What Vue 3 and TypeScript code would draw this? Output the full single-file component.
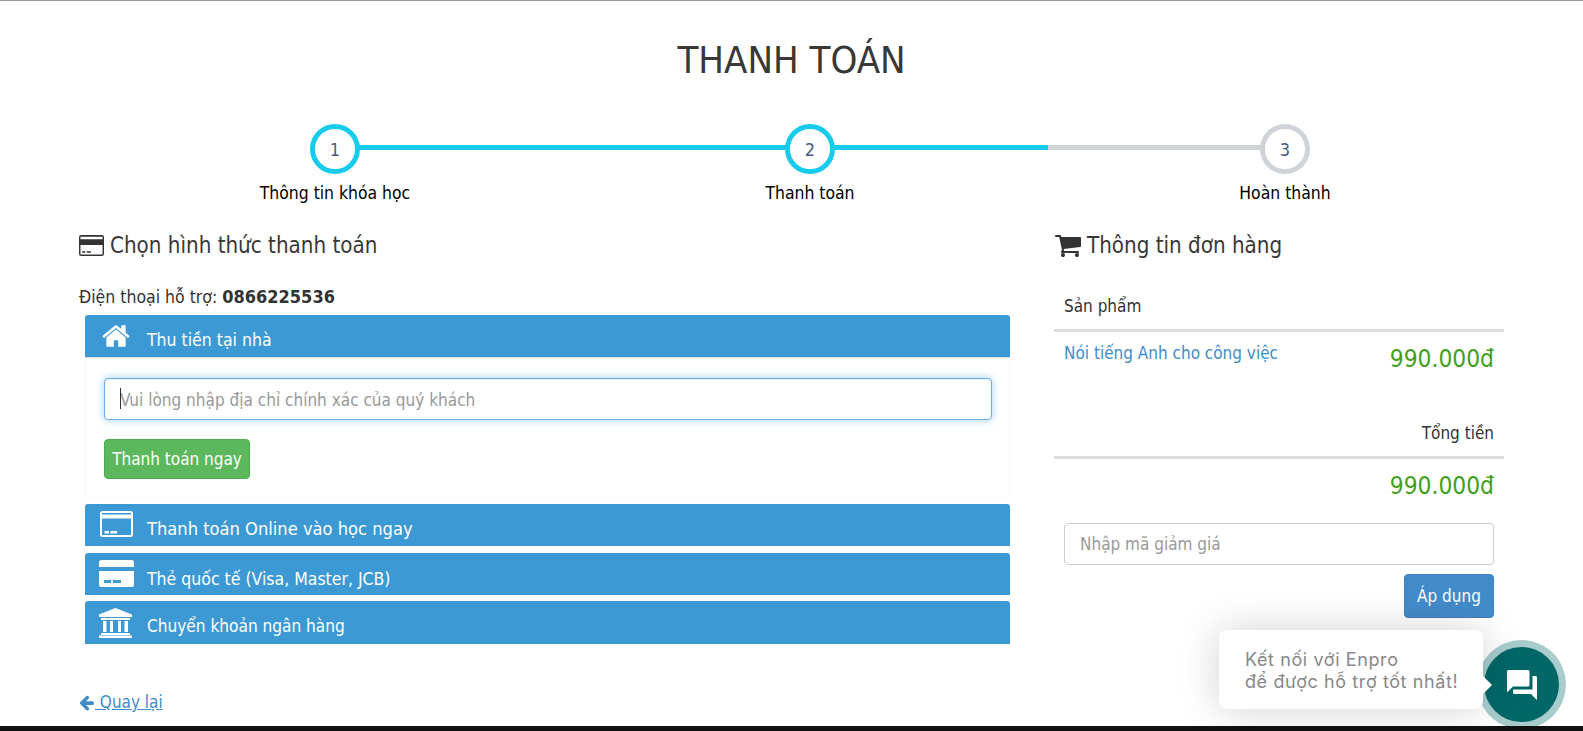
<script setup lang="ts">
interface Step {
  num: number
  label: string
  state: 'done' | 'half' | 'todo'
}

const steps: Step[] = [
  { num: 1, label: 'Thông tin khóa học', state: 'done' },
  { num: 2, label: 'Thanh toán', state: 'half' },
  { num: 3, label: 'Hoàn thành', state: 'todo' },
]
</script>

<template>
  <div class="page">
    <h1 class="title">THANH TOÁN</h1>

    <div class="steps">
      <div v-for="s in steps" :key="s.num" :class="['step', 'step--' + s.state]">
        <div class="step__circle">{{ s.num }}</div>
        <div class="step__label">{{ s.label }}</div>
      </div>
    </div>

    <div class="columns">
      <div class="left">
        <h3 class="heading">
          <svg class="heading__card" viewBox="0 0 24 20">
            <path fill-rule="evenodd" d="M2 0h20a2 2 0 0 1 2 2v16a2 2 0 0 1-2 2H2a2 2 0 0 1-2-2V2a2 2 0 0 1 2-2zm-.6 1.500v2.500h21.200V1.500zm0 8v8.500a.6.6 0 0 0 .6.6h20a.6.6 0 0 0 .6-.6V9.500zM3 15.500h3v1.500H3zm4.500 0h4v1.500h-4z" />
          </svg>
          Chọn hình thức thanh toán
        </h3>
        <p class="support">Điện thoại hỗ trợ: <b>0866225536</b></p>

        <div class="methods">
          <div class="method method--open">
            <div class="method__head method__head--first">
              <span class="method__icon">
                <svg class="ico-home" viewBox="0 0 1792 1792">
                  <path d="M1472 992v480q0 26-19 45t-45 19h-384v-384h-256v384h-384q-26 0-45-19t-19-45v-480q0-1 .5-3t.5-3l575-474 575 474q1 2 1 6zm223-69l-62 74q-8 9-21 11h-3q-13 0-21-7l-692-577-692 577q-12 8-24 7-13-2-21-11l-62-74q-8-10-7-23.500t11-21.500l719-599q32-26 76-26t76 26l244 204v-195q0-14 9-23t23-9h192q14 0 23 9t9 23v408l219 182q10 8 11 21.500t-7 23.500z" />
                </svg>
              </span>
              <span>Thu tiền tại nhà</span>
            </div>
            <div class="method__body">
              <div class="address">
                <span class="caret"></span>
                <input class="address__input" type="text" placeholder="Vui lòng nhập địa chỉ chính xác của quý khách" />
              </div>
              <button class="btn-pay">Thanh toán ngay</button>
            </div>
          </div>

          <div class="method__head method__head--online">
            <span class="method__icon">
              <svg class="ico-card" viewBox="0 0 33 26">
                <path fill-rule="evenodd" d="M2.500 0h28A2.500 2.500 0 0 1 33 2.500v21a2.500 2.500 0 0 1-2.500 2.500h-28A2.500 2.500 0 0 1 0 23.500v-21A2.500 2.500 0 0 1 2.500 0zM2 2v1.500h29V2zm0 5.500v16a.5.5 0 0 0 .5.5h28a.5.5 0 0 0 .5-.5V7.500zm2.500 12.500h4.500v2.500H4.500zm6 0H17v2.500h-6.500z" />
              </svg>
            </span>
            <span class="method__text--wide">Thanh toán Online vào học ngay</span>
          </div>

          <div class="method__head method__head--visa">
            <span class="method__icon">
              <svg class="ico-card ico-card--solid" viewBox="0 0 35 27">
                <path fill-rule="evenodd" d="M2.500 0h30A2.500 2.500 0 0 1 35 2.500V7H0V2.500A2.500 2.500 0 0 1 2.500 0zM0 11h35v13.500a2.500 2.500 0 0 1-2.500 2.500h-30A2.500 2.500 0 0 1 0 24.500zm5 9v3h7v-3zm9 0v3h8v-3z" />
              </svg>
            </span>
            <span>Thẻ quốc tế (Visa, Master, JCB)</span>
          </div>

          <div class="method__head method__head--bank">
            <span class="method__icon">
              <svg class="ico-bank" viewBox="0 0 33 30">
                <path d="M16.500 0 33 6.500V9H0V6.500zM2 10h29v2H2zM4 13h3.500v11H4zm7 0h3v11h-3zm8 0h3v11h-3zm6.500 0H29v11h-3.500zM2 25h29v2H2zM0 27.500h33V30H0z" />
              </svg>
            </span>
            <span class="method__text--tight">Chuyển khoản ngân hàng</span>
          </div>
        </div>

        <a class="back" href="#">
          <svg class="back__arrow" viewBox="0 0 1792 1792">
            <path d="M1664 896v128q0 53-32.500 90.500t-84.500 37.500h-704l293 294q38 36 38 90t-38 90l-75 76q-37 37-90 37-52 0-91-37l-651-652q-37-37-37-90 0-52 37-91l651-650q38-38 91-38 52 0 90 38l75 74q38 38 38 91t-38 91l-293 293h704q52 0 84.500 37.500t32.500 90.500z" />
          </svg><span class="back__text"> Quay lại</span>
        </a>
      </div>

      <div class="right">
        <h3 class="heading heading--order">
          <svg class="heading__cart" viewBox="0 0 1792 1792">
            <path d="M704 1536q0 52-38 90t-90 38-90-38-38-90 38-90 90-38 90 38 38 90zm896 0q0 52-38 90t-90 38-90-38-38-90 38-90 90-38 90 38 38 90zm128-1088v512q0 24-16.500 42.500t-40.500 21.500l-1044 122q13 60 13 70 0 16-24 64h920q26 0 45 19t19 45-19 45-45 19h-1024q-26 0-45-19t-19-45q0-11 8-31.500t16-36 21.500-40 15.500-29.500l-177-823h-204q-26 0-45-19t-19-45 19-45 45-19h256q16 0 28.500 6.500t19.500 15.500 13 24.500 8 26 5.500 29.500 4.500 26h1201q26 0 45 19t19 45z" />
          </svg>
          Thông tin đơn hàng
        </h3>

        <div class="order__head">Sản phẩm</div>
        <div class="order__row">
          <a class="order__name" href="#">Nói tiếng Anh cho công việc</a>
          <span class="price">990.000đ</span>
        </div>
        <div class="order__total-label">Tổng tiền</div>
        <div class="order__total">
          <span class="price">990.000đ</span>
        </div>
        <div class="coupon">
          <input class="coupon__input" type="text" placeholder="Nhập mã giảm giá" />
          <button class="btn-apply">Áp dụng</button>
        </div>
      </div>
    </div>

    <div class="chat">
      <div class="chat__tip">
        <div class="chat__line">Kết nối với Enpro</div>
        <div class="chat__line">để được hỗ trợ tốt nhất!</div>
      </div>
      <div class="chat__ring">
        <div class="chat__btn">
          <svg viewBox="0 0 24 24">
            <path d="M21 6h-2v9H6v2c0 .55.45 1 1 1h11l4 4V7c0-.55-.45-1-1-1zm-4 6V3c0-.55-.45-1-1-1H3c-.55 0-1 .45-1 1v14l4-4h10c.55 0 1-.45 1-1z" />
          </svg>
        </div>
      </div>
    </div>

    <div class="bottom-bar"></div>
  </div>
</template>

<style>
html,
body {
  margin: 0;
  background: #fff;
}
</style>

<style scoped>
.page {
  position: relative;
  height: 731px;
  overflow: hidden;
  box-sizing: border-box;
  border-top: 1px solid #999;
  font-family: 'DejaVu Sans', 'Noto Sans', sans-serif;
  font-stretch: condensed;
  font-size: 17px;
  color: #333;
}
.title {
  margin: 0;
  padding-top: 37px;
  font-size: 38px;
  line-height: 44px;
  font-weight: 400;
  text-align: center;
  color: #383838;
}
.steps {
  display: grid;
  grid-template-columns: repeat(3, 475px);
  margin: 42px 0 0 97.500px;
}
.step {
  position: relative;
  display: flex;
  flex-direction: column;
  align-items: center;
}
.step::after {
  content: '';
  position: absolute;
  top: 21px;
  left: 50%;
  width: 100%;
  height: 5px;
  background: #16cbec;
}
.step--half::after {
  background: linear-gradient(to right, #16cbec 0, #16cbec 238px, #d0d3d8 238px);
}
.step--todo::after {
  display: none;
}
.step__circle {
  position: relative;
  z-index: 1;
  box-sizing: border-box;
  width: 50px;
  height: 50px;
  border: 5px solid #16cbec;
  border-radius: 50%;
  background: #fff;
  display: flex;
  align-items: center;
  justify-content: center;
  font-size: 18px;
  color: #4a5a80;
}
.step--todo .step__circle {
  border-color: #d0d3d8;
}
.step__label {
  margin-top: 8px;
  line-height: 22px;
  color: #000;
  white-space: nowrap;
  font-size: 17.400px;
}
.columns {
  display: flex;
  margin-top: 26px;
  padding-left: 79px;
}
.left {
  width: 931px;
  flex: none;
}
.right {
  width: 450px;
  flex: none;
  margin-left: 44px;
}
.heading {
  margin: 0;
  display: flex;
  align-items: center;
  gap: 6px;
  font-size: 22.200px;
  line-height: 30px;
  font-weight: 400;
  color: #383838;
}
.heading svg {
  fill: #333;
}
.heading__card {
  width: 25px;
  height: 21px;
}
.heading__cart {
  width: 28px;
  height: 28px;
  margin-right: -1px;
}
.support {
  margin: 26px 0 0;
  line-height: 22px;
  font-size: 17.500px;
}
.support b {
  font-size: 18px;
}
.methods {
  margin: 7px 0 0 6px;
  width: 925px;
}
.method__head {
  display: flex;
  align-items: flex-end;
  box-sizing: border-box;
  height: 42px;
  padding-left: 62px;
  padding-bottom: 5px;
  background: #3c99d4;
  border-radius: 3px 3px 0 0;
  color: #fff;
  line-height: 22px;
  font-size: 17.500px;
  position: relative;
}
.method__text--wide {
  font-size: 18.150px;
}
.method__text--tight {
  font-size: 17.100px;
}
.method__head--first {
  height: 43px;
  border-bottom: 1px solid #ddd;
  padding-bottom: 6px;
}
.method__head--online {
  margin-top: 6px;
  padding-bottom: 6px;
}
.method__head--visa {
  margin-top: 7px;
  padding-bottom: 5px;
}
.method__head--bank {
  margin-top: 6px;
  height: 43px;
  padding-bottom: 7px;
}
.method__icon {
  position: absolute;
  left: 15px;
  top: 7px;
  display: flex;
}
.method__icon svg {
  fill: #fff;
}
.ico-home {
  width: 30px;
  height: 30px;
  margin-top: -1px;
  margin-left: 1px;
}
.ico-card {
  width: 33px;
  height: 26px;
}
.ico-card--solid {
  width: 35px;
  height: 27px;
  margin-left: -1px;
}
.ico-bank {
  width: 33px;
  height: 30px;
  margin-left: -1px;
}
.method__body {
  box-sizing: border-box;
  height: 140px;
  padding: 20px 17px 0 18px;
  border: 1px solid #f8f8f8;
  border-top: 0;
  border-radius: 0 0 3px 3px;
}
.address {
  position: relative;
  display: flex;
}
.caret {
  position: absolute;
  left: 16px;
  top: 10px;
  width: 1px;
  height: 21px;
  background: #333;
}
.address__input {
  box-sizing: border-box;
  width: 100%;
  height: 42px;
  padding: 2px 15px 0;
  border: 1px solid #66afe9;
  border-radius: 4px;
  outline: 0;
  font: inherit;
  font-stretch: condensed;
  font-size: 17.050px;
  box-shadow: inset 0 1px 1px rgba(0, 0, 0, 0.075), 0 0 8px rgba(102, 175, 233, 0.6);
}
.address__input::placeholder,
.coupon__input::placeholder {
  color: #999;
  opacity: 1;
}
.btn-pay {
  display: block;
  box-sizing: border-box;
  width: 146px;
  height: 40px;
  margin-top: 19px;
  border: 1px solid #4cae4c;
  border-radius: 4px;
  background: #5cb85c;
  color: #fff;
  font: inherit;
  font-stretch: condensed;
  padding: 0;
}
.back {
  display: inline-flex;
  align-items: center;
  margin-top: 47px;
  line-height: 22px;
  color: #428bca;
  text-decoration: none;
}
.back__text {
  text-decoration: underline;
  white-space: pre;
}
.back__arrow {
  width: 17px;
  height: 17px;
  fill: #428bca;
  margin-left: -1px;
}
.order__head {
  margin-top: 35px;
  padding: 0 10px 12px;
  line-height: 22px;
  border-bottom: 3px solid #ddd;
}
.order__row {
  display: flex;
  justify-content: space-between;
  align-items: flex-start;
  padding: 10px 10px 0;
  height: 84px;
  box-sizing: border-box;
}
.order__name {
  color: #428bca;
  text-decoration: none;
  line-height: 22px;
}
.price {
  margin-top: 2px;
  font-size: 24.300px;
  line-height: 30px;
  color: #43a01f;
}
.order__total-label {
  padding: 6px 10px 12px;
  text-align: right;
  line-height: 22px;
  border-bottom: 3px solid #ddd;
}
.order__total {
  padding: 8px 10px 0;
  text-align: right;
  height: 64px;
  box-sizing: border-box;
}
.order__total .price {
  display: block;
  margin-top: 4px;
}
.coupon {
  padding: 0 10px;
  display: flex;
  flex-direction: column;
  align-items: flex-end;
}
.coupon__input {
  box-sizing: border-box;
  width: 100%;
  height: 42px;
  padding: 0 15px;
  border: 1px solid #ccc;
  border-radius: 4px;
  outline: 0;
  font: inherit;
  font-stretch: condensed;
}
.btn-apply {
  box-sizing: border-box;
  width: 90px;
  height: 44px;
  margin-top: 9px;
  border: 1px solid #3d80bd;
  border-radius: 4px;
  background: #428bca;
  color: #fff;
  font: inherit;
  font-stretch: condensed;
  padding: 0;
}
.chat {
  position: absolute;
  left: 1219px;
  top: 629px;
  display: flex;
  align-items: flex-start;
}
.chat__tip {
  position: relative;
  box-sizing: border-box;
  width: 264px;
  height: 79px;
  padding: 19px 0 0 26px;
  background: #fff;
  border-radius: 8px;
  box-shadow: 0 0 40px rgba(0, 0, 0, 0.18);
  font-family: 'Inter', 'Noto Sans', sans-serif;
  font-stretch: normal;
  font-size: 18px;
  letter-spacing: 0.6px;
  color: #888;
}
.chat__line {
  line-height: 22px;
}
.chat__tip::after {
  content: '';
  position: absolute;
  right: -9px;
  top: 46px;
  width: 0;
  height: 0;
  border-top: 9px solid transparent;
  border-bottom: 9px solid transparent;
  border-left: 9px solid #fff;
  z-index: 2;
}
.chat__ring {
  flex: none;
  box-sizing: border-box;
  width: 89px;
  height: 89px;
  margin: 10px 0 0 -6px;
  padding: 7px;
  border-radius: 50%;
  background: #a8cccc;
}
.chat__btn {
  width: 75px;
  height: 75px;
  border-radius: 50%;
  background: #006666;
  display: flex;
  align-items: center;
  justify-content: center;
}
.chat__btn svg {
  width: 36px;
  height: 36px;
  fill: #fff;
}
.bottom-bar {
  position: absolute;
  left: 0;
  right: 0;
  bottom: 0;
  height: 5px;
  background: #111;
}
</style>
